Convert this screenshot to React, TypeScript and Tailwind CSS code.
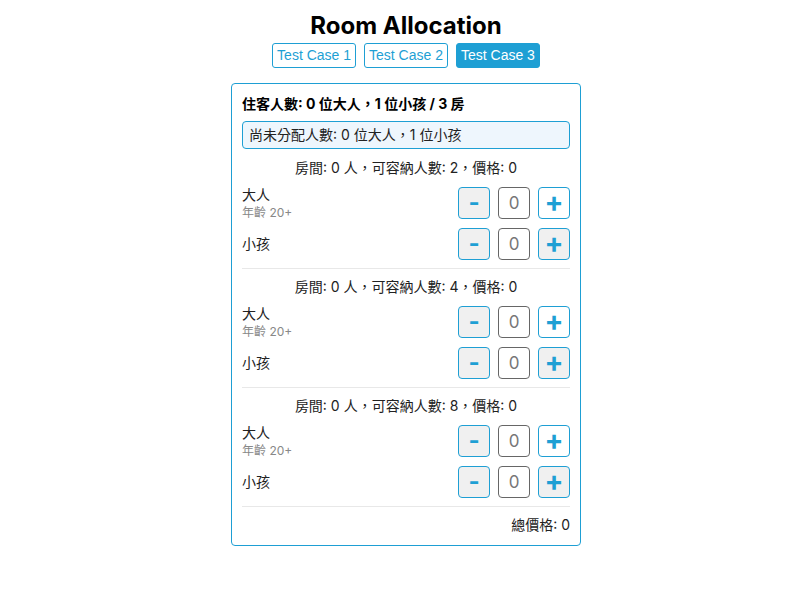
import { useState } from 'react';

type Room = { capacity: number; adults: number; children: number };

const CASES: Record<number, { adults: number; children: number; rooms: number[] }> = {
  1: { adults: 4, children: 2, rooms: [2, 4, 4] },
  2: { adults: 2, children: 0, rooms: [2, 2] },
  3: { adults: 0, children: 1, rooms: [2, 4, 8] },
};

function Counter({ value, plusGray }: { value: number; plusGray?: boolean }) {
  return (
    <div className="flex items-center gap-2">
      <button
        type="button"
        className="w-8 h-8 rounded border border-[#1e9fd4] bg-[#f0f0f0] text-[#1e9fd4] text-2xl font-bold leading-none flex items-center justify-center"
      >
        -
      </button>
      <div className="w-8 h-8 rounded border border-[#666] bg-white text-[#777] text-[17px] flex items-center justify-center">
        {value}
      </div>
      <button
        type="button"
        className={`w-8 h-8 rounded border border-[#1e9fd4] text-[#1e9fd4] text-[28px] font-bold leading-none flex items-center justify-center pb-[2px] ${
          plusGray ? 'bg-[#f0f0f0]' : 'bg-white'
        }`}
      >
        +
      </button>
    </div>
  );
}

function RoomSection({ room }: { room: Room }) {
  return (
    <div className="flex flex-col gap-[7px] pt-2 pb-2 border-b border-[#e8e8e8]">
      <div className="text-center leading-5 text-[#222]">
        房間: {room.adults + room.children} 人，可容納人數: {room.capacity}，價格: 0
      </div>
      <div className="flex items-center justify-between">
        <div className="flex flex-col">
          <span className="leading-5 text-[#222]">大人</span>
          <span className="text-xs leading-4 text-[#888]">年齡 20+</span>
        </div>
        <Counter value={room.adults} />
      </div>
      <div className="flex items-center justify-between">
        <span className="leading-5 text-[#222]">小孩</span>
        <Counter value={room.children} plusGray />
      </div>
    </div>
  );
}

export default function App() {
  const [current, setCurrent] = useState(3);
  const data = CASES[current];
  const rooms: Room[] = data.rooms.map(capacity => ({ capacity, adults: 0, children: 0 }));

  return (
    <div
      className="w-full flex flex-col items-center pl-3 text-sm text-black"
      style={{ fontFamily: 'Inter, "Noto Sans CJK TC", sans-serif' }}
    >
      <h1 className="mt-[10px] text-2xl leading-8 font-bold">Room Allocation</h1>
      <div className="mt-px flex gap-2" style={{ fontFamily: '"Liberation Sans", Arial, sans-serif' }}>
        {[1, 2, 3].map(n => (
          <button
            key={n}
            type="button"
            onClick={() => setCurrent(n)}
            className={`px-[4px] py-[3px] rounded-[3px] border border-[#1e9fd4] text-sm leading-[17px] h-[25px] ${
              current === n ? 'bg-[#1e9fd4] text-white' : 'bg-white text-[#1e9fd4]'
            }`}
          >
            Test Case {n}
          </button>
        ))}
      </div>
      <div className="mt-[15px] w-[350px] rounded border border-[#1e9fd4] p-[10px] flex flex-col">
        <div className="font-bold leading-5">
          住客人數: {data.adults} 位大人，{data.children} 位小孩 / {data.rooms.length} 房
        </div>
        <div className="mt-[7px] mb-px rounded border border-[#1e9fd4] bg-[#eef6fd] px-[6px] py-[3px] leading-5 text-[#222]">
          尚未分配人數: {data.adults} 位大人，{data.children} 位小孩
        </div>
        {rooms.map((room, i) => (
          <RoomSection key={i} room={room} />
        ))}
        <div className="pt-2 text-right leading-5 text-[#222]">總價格: 0</div>
      </div>
    </div>
  );
}
